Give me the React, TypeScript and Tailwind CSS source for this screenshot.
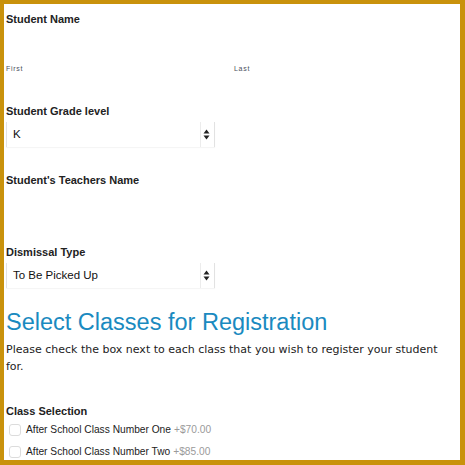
import React from "react";

function Label({ children, className = "" }: { children: React.ReactNode; className?: string }) {
  return (
    <div className={`text-[11px] font-bold leading-[14px] text-[#222] ${className}`}>{children}</div>
  );
}

function Select({ value, className = "" }: { value: string; className?: string }) {
  return (
    <div
      className={`flex h-[25px] w-[209px] items-center justify-between border-l border-r border-[#e2e2e2] bg-white pl-[6px] pr-[4px] shadow-[0_1px_1px_rgba(0,0,0,0.04)] ${className}`}
    >
      <span className="text-[11.5px] text-[#111]">{value}</span>
      <div className="flex h-full items-center border-l border-[#ececec] pl-[2px]">
        <svg width="7" height="11" viewBox="0 0 7 11">
          <path d="M3.5 0.5 L6.5 4.5 L0.5 4.5 Z" fill="#222" />
          <path d="M3.5 10.5 L6.5 6.5 L0.5 6.5 Z" fill="#222" />
        </svg>
      </div>
    </div>
  );
}

function ClassOption({ name, price }: { name: string; price: string }) {
  return (
    <div className="flex h-[22px] items-center">
      <div className="ml-[3px] h-[12px] w-[12px] rounded-[3px] border border-[#dcdcdc] bg-white" />
      <span className="ml-[5px] text-[10.2px] text-[#222]">{name}</span>
      <span className="ml-[3px] text-[10.2px] text-[#9a9a9a]">{price}</span>
    </div>
  );
}

export default function App() {
  return (
    <div className="h-[465px] w-[465px] overflow-hidden border-b-[5px] border-l-4 border-r-[5px] border-t-4 border-[#c9920c] bg-white pl-[2px] font-['Liberation_Sans',Arial,sans-serif]">
      <Label className="mt-[8px]">Student Name</Label>
      <div className="h-[38px]" />
      <div className="flex text-[7px] leading-[10px] tracking-[0.1em] text-[#4a4f5c]">
        <span className="w-[228px]">First</span>
        <span>Last</span>
      </div>

      <Label className="mt-[30px]">Student Grade level</Label>
      <Select value="K" className="mt-[4px]" />

      <Label className="mt-[26px]">Student's Teachers Name</Label>

      <Label className="mt-[58px]">Dismissal Type</Label>
      <Select value="To Be Picked Up" className="mt-[4px]" />

      <h2 className="mt-[20px] text-[23.5px] leading-[28px] text-[#1a8ac0]">
        Select Classes for Registration
      </h2>
      <p className="mt-[5px] w-[440px] font-['DejaVu_Sans',Verdana,sans-serif] text-[11px] leading-[17px] text-[#222]">
        Please check the box next to each class that you wish to register your student for.
      </p>

      <Label className="mt-[29px]">Class Selection</Label>
      <div className="mt-[1px]">
        <ClassOption name="After School Class Number One" price="+$70.00" />
        <ClassOption name="After School Class Number Two" price="+$85.00" />
      </div>
    </div>
  );
}
